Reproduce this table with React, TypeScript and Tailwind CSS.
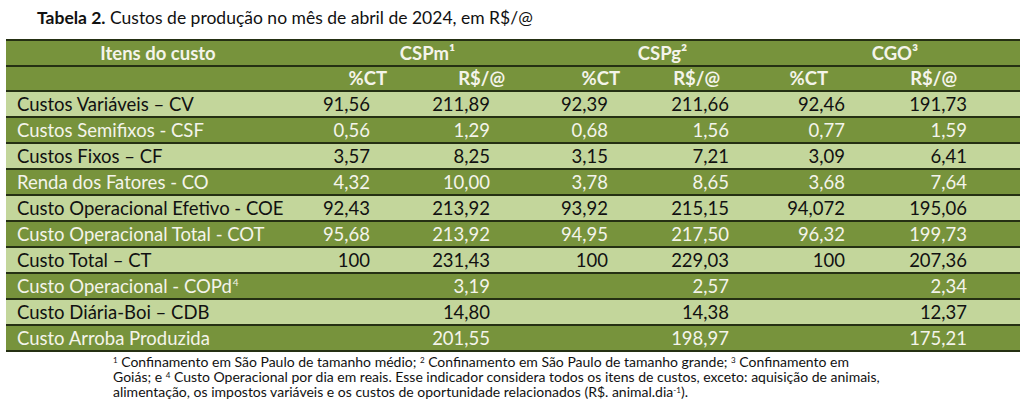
const cols = 'grid grid-cols-[304px_90px_145px_95px_140px_90px_150px]';

type Row = { label: React.ReactNode; v: string[]; dark: boolean };

const rows: Row[] = [
  { label: 'Custos Variáveis – CV', v: ['91,56', '211,89', '92,39', '211,66', '92,46', '191,73'], dark: false },
  { label: 'Custos Semifixos - CSF', v: ['0,56', '1,29', '0,68', '1,56', '0,77', '1,59'], dark: true },
  { label: 'Custos Fixos – CF', v: ['3,57', '8,25', '3,15', '7,21', '3,09', '6,41'], dark: false },
  { label: 'Renda dos Fatores - CO', v: ['4,32', '10,00', '3,78', '8,65', '3,68', '7,64'], dark: true },
  { label: 'Custo Operacional Efetivo - COE', v: ['92,43', '213,92', '93,92', '215,15', '94,072', '195,06'], dark: false },
  { label: 'Custo Operacional Total - COT', v: ['95,68', '213,92', '94,95', '217,50', '96,32', '199,73'], dark: true },
  { label: 'Custo Total – CT', v: ['100', '231,43', '100', '229,03', '100', '207,36'], dark: false },
  {
    label: (
      <>
        Custo Operacional - COPd<sup className="text-[10px] ml-[1px] -top-[7px]">4</sup>
      </>
    ),
    v: ['', '3,19', '', '2,57', '', '2,34'],
    dark: true,
  },
  { label: 'Custo Diária-Boi – CDB', v: ['', '14,80', '', '14,38', '', '12,37'], dark: false },
  { label: 'Custo Arroba Produzida', v: ['', '201,55', '', '198,97', '', '175,21'], dark: true },
];

// right padding per value column so the numbers line up like the original
const valPad = ['pr-[30px]', 'pr-[55px]', 'pr-[32px]', 'pr-[51px]', 'pr-[25px]', 'pr-[53px]'];
const headPad = ['pr-[13px]', 'pr-[40px]', 'pr-[20px]', 'pr-[60px]', 'pr-[42px]', 'pr-[63px]'];
const subHeads = ['%CT', 'R$/@', '%CT', 'R$/@', '%CT', 'R$/@'];

export default function App() {
  return (
    <div className="w-[1024px] h-[416px] bg-white text-[#111] font-['Lato',sans-serif] overflow-hidden">
      <div className="h-[39px] pl-[37px] pt-[6px] text-[17.5px] leading-[24px]">
        <span className="font-bold">Tabela 2.</span> Custos de produção no mês de abril de 2024, em R$/@
      </div>

      <div className="ml-[6px] w-[1014px] border-t-2 border-[#253013]">
        <div className={`${cols} h-[26px] bg-[#77933c] border-b-2 border-[#253013] text-[#f4f4ea] font-bold text-[18.5px] leading-[24px]`}>
          <div className="text-center">Itens do custo</div>
          <div className="col-span-2 text-center">CSPm¹</div>
          <div className="col-span-2 text-center">CSPg²</div>
          <div className="col-span-2 text-center pr-[10px]">CGO³</div>
        </div>
        <div className={`${cols} h-[25px] bg-[#77933c] border-b-2 border-[#253013] text-[#f4f4ea] font-bold text-[18.5px] leading-[23px]`}>
          <div />
          {subHeads.map((h, i) => (
            <div key={i} className={`text-right ${headPad[i]}`}>
              {h}
            </div>
          ))}
        </div>
        {rows.map((r, i) => (
          <div
            key={i}
            className={`${cols} h-[26px] border-b-2 border-[#253013] text-[18.5px] leading-[24px] ${
              r.dark ? 'bg-[#77933c] text-[#f4f4ea]' : 'bg-[#c3d69b] text-[#111]'
            }`}
          >
            <div className="pl-[11px] whitespace-nowrap">{r.label}</div>
            {r.v.map((v, j) => (
              <div key={j} className={`text-right ${valPad[j]}`}>
                {v}
              </div>
            ))}
          </div>
        ))}
      </div>

      <div className="pl-[113px] pt-[2px] text-[14px] leading-[15px] text-[#111] whitespace-nowrap">
        <sup className="text-[8px] leading-none">1</sup> Confinamento em São Paulo de tamanho médio; <sup className="text-[8px] leading-none">2</sup> Confinamento em São Paulo de tamanho grande; <sup className="text-[8px] leading-none">3</sup> Confinamento em
        <br />
        Goiás; e <sup className="text-[8px] leading-none">4</sup> Custo Operacional por dia em reais. Esse indicador considera todos os itens de custos, exceto: aquisição de animais,
        <br />
        alimentação, os impostos variáveis e os custos de oportunidade relacionados (R$. animal.dia<sup className="text-[8px] leading-none">-1</sup>).
      </div>
    </div>
  );
}
